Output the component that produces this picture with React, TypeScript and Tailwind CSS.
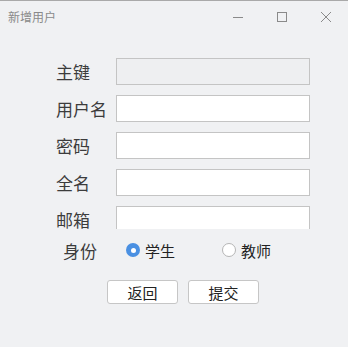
import React from "react";

const font = { fontFamily: '"Noto Sans CJK SC", "Noto Sans", sans-serif' };

function Field({ label, disabled, cut }: { label: string; disabled?: boolean; cut?: boolean }) {
  return (
    <div className={"flex items-center shrink-0 " + (cut ? "h-[23px] items-start" : "h-[27px]")}>
      <div className={"w-[60px] text-[17px] leading-none text-[#3c3c3c] " + (cut ? "pt-[5px]" : "")}>{label}</div>
      <div
        className={
          "w-[194px] border border-[#c4c4c4] " +
          (cut ? "h-[23px] border-b-0 " : "h-[27px] ") +
          (disabled ? "bg-[#eeeff1]" : "bg-white")
        }
      />
    </div>
  );
}

export default function App() {
  return (
    <div className="w-[348px] h-[347px] bg-[#f0f1f3] border-t border-[#a9a9a9] overflow-hidden" style={font}>
      <div className="flex items-center h-[31px] pl-[8px]">
        <div className="text-[12px] text-[#8a8a8a] leading-none">新增用户</div>
        <div className="ml-auto flex items-center h-full">
          <div className="w-[44px] h-full flex items-center justify-center">
            <svg width="12" height="12" viewBox="0 0 12 12">
              <line x1="1" y1="6.5" x2="11" y2="6.5" stroke="#8a8a8a" strokeWidth="1" />
            </svg>
          </div>
          <div className="w-[44px] h-full flex items-center justify-center">
            <svg width="12" height="12" viewBox="0 0 12 12">
              <rect x="1.5" y="1.5" width="9" height="9" fill="none" stroke="#8a8a8a" strokeWidth="1" />
            </svg>
          </div>
          <div className="w-[44px] h-full flex items-center justify-center">
            <svg width="12" height="12" viewBox="0 0 12 12">
              <path d="M1 1 L11 11 M11 1 L1 11" stroke="#8a8a8a" strokeWidth="1" />
            </svg>
          </div>
        </div>
      </div>
      <div className="h-[197px] pt-[26px] pl-[56px] flex flex-col gap-[10px]">
        <Field label="主键" disabled />
        <Field label="用户名" />
        <Field label="密码" />
        <Field label="全名" />
        <Field label="邮箱" cut />
      </div>
      <div className="flex items-center h-[42px] pl-[63px]">
        <div className="w-[63px] text-[17px] leading-none text-[#3c3c3c]">身份</div>
        <div className="flex items-center w-[96px]">
          <div className="w-[14px] h-[14px] rounded-full bg-[#4a90e2] flex items-center justify-center">
            <div className="w-[5px] h-[5px] rounded-full bg-white" />
          </div>
          <span className="ml-[5px] text-[15px] leading-none text-[#222]">学生</span>
        </div>
        <div className="flex items-center">
          <div className="w-[14px] h-[14px] rounded-full border border-[#b5b5b5] bg-white" />
          <span className="ml-[5px] text-[15px] leading-none text-[#222]">教师</span>
        </div>
      </div>
      <div className="flex pl-[107px] gap-[10px] mt-[9px]">
        <div className="w-[71px] h-[24px] rounded-[3px] border border-[#c6c6c6] bg-white flex items-center justify-center text-[15px] text-[#222] leading-none">
          返回
        </div>
        <div className="w-[71px] h-[24px] rounded-[3px] border border-[#c6c6c6] bg-white flex items-center justify-center text-[15px] text-[#222] leading-none">
          提交
        </div>
      </div>
    </div>
  );
}
